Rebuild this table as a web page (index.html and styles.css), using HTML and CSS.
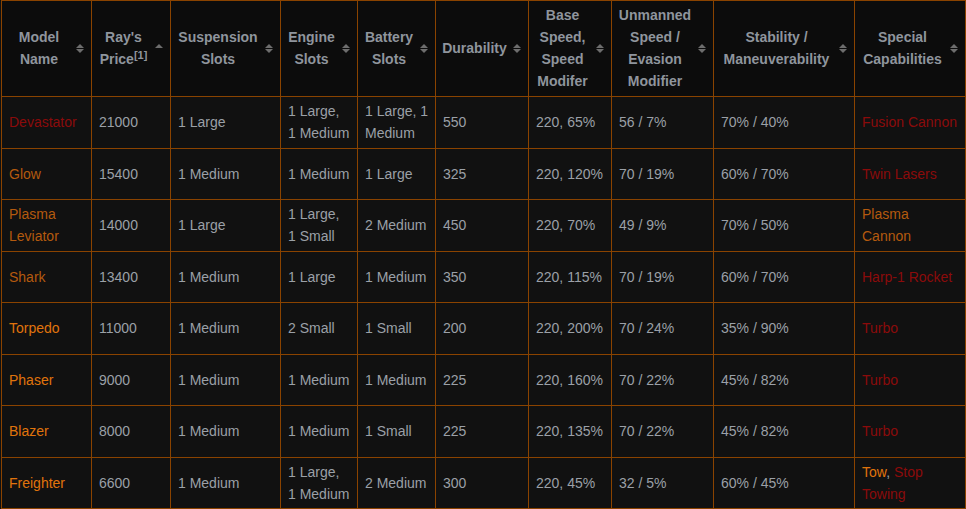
FILE: index.html
```html
<!DOCTYPE html>
<html lang="en">
<head>
<meta charset="utf-8">
<title>Hoverbikes</title>
<link rel="stylesheet" href="styles.css">
</head>
<body>
<table class="bikes">
  <colgroup>
    <col class="c1"><col class="c2"><col class="c3"><col class="c4"><col class="c5">
    <col class="c6"><col class="c7"><col class="c8"><col class="c9"><col class="c10">
  </colgroup>
  <thead>
    <tr>
      <th>Model Name<span class="sort"><svg width="8" height="9" viewBox="0 0 8 9"><path d="M4 0L8 4H0Z M0 5H8L4 9Z" fill="#6d6d6d"/></svg></span></th>
      <th>Ray's Price<sup>[1]</sup><span class="sort"><svg width="8" height="9" viewBox="0 0 8 9"><path d="M4 0L8 4H0Z" fill="#6d6d6d"/></svg></span></th>
      <th>Suspension Slots<span class="sort"><svg width="8" height="9" viewBox="0 0 8 9"><path d="M4 0L8 4H0Z M0 5H8L4 9Z" fill="#6d6d6d"/></svg></span></th>
      <th>Engine Slots<span class="sort"><svg width="8" height="9" viewBox="0 0 8 9"><path d="M4 0L8 4H0Z M0 5H8L4 9Z" fill="#6d6d6d"/></svg></span></th>
      <th>Battery Slots<span class="sort"><svg width="8" height="9" viewBox="0 0 8 9"><path d="M4 0L8 4H0Z M0 5H8L4 9Z" fill="#6d6d6d"/></svg></span></th>
      <th>Durability<span class="sort"><svg width="8" height="9" viewBox="0 0 8 9"><path d="M4 0L8 4H0Z M0 5H8L4 9Z" fill="#6d6d6d"/></svg></span></th>
      <th>Base Speed, Speed Modifer<span class="sort"><svg width="8" height="9" viewBox="0 0 8 9"><path d="M4 0L8 4H0Z M0 5H8L4 9Z" fill="#6d6d6d"/></svg></span></th>
      <th>Unmanned Speed / Evasion Modifier<span class="sort"><svg width="8" height="9" viewBox="0 0 8 9"><path d="M4 0L8 4H0Z M0 5H8L4 9Z" fill="#6d6d6d"/></svg></span></th>
      <th>Stability / Maneuverability<span class="sort"><svg width="8" height="9" viewBox="0 0 8 9"><path d="M4 0L8 4H0Z M0 5H8L4 9Z" fill="#6d6d6d"/></svg></span></th>
      <th>Special Capabilities<span class="sort"><svg width="8" height="9" viewBox="0 0 8 9"><path d="M4 0L8 4H0Z M0 5H8L4 9Z" fill="#6d6d6d"/></svg></span></th>
    </tr>
  </thead>
  <tbody>
    <tr>
      <td><a class="new">Devastator</a></td><td>21000</td><td>1 Large</td><td>1 Large, 1 Medium</td><td>1 Large, 1 Medium</td><td>550</td><td>220, 65%</td><td>56 / 7%</td><td>70% / 40%</td><td><a class="new">Fusion Cannon</a></td>
    </tr>
    <tr>
      <td><a class="visited">Glow</a></td><td>15400</td><td>1 Medium</td><td>1 Medium</td><td>1 Large</td><td>325</td><td>220, 120%</td><td>70 / 19%</td><td>60% / 70%</td><td><a class="new">Twin Lasers</a></td>
    </tr>
    <tr>
      <td><a class="visited">Plasma Leviator</a></td><td>14000</td><td>1 Large</td><td>1 Large, 1 Small</td><td>2 Medium</td><td>450</td><td>220, 70%</td><td>49 / 9%</td><td>70% / 50%</td><td><a class="visited">Plasma Cannon</a></td>
    </tr>
    <tr>
      <td><a class="visited">Shark</a></td><td>13400</td><td>1 Medium</td><td>1 Large</td><td>1 Medium</td><td>350</td><td>220, 115%</td><td>70 / 19%</td><td>60% / 70%</td><td><a class="new">Harp-1 Rocket</a></td>
    </tr>
    <tr>
      <td><a class="link">Torpedo</a></td><td>11000</td><td>1 Medium</td><td>2 Small</td><td>1 Small</td><td>200</td><td>220, 200%</td><td>70 / 24%</td><td>35% / 90%</td><td><a class="new">Turbo</a></td>
    </tr>
    <tr>
      <td><a class="link">Phaser</a></td><td>9000</td><td>1 Medium</td><td>1 Medium</td><td>1 Medium</td><td>225</td><td>220, 160%</td><td>70 / 22%</td><td>45% / 82%</td><td><a class="new">Turbo</a></td>
    </tr>
    <tr>
      <td><a class="link">Blazer</a></td><td>8000</td><td>1 Medium</td><td>1 Medium</td><td>1 Small</td><td>225</td><td>220, 135%</td><td>70 / 22%</td><td>45% / 82%</td><td><a class="new">Turbo</a></td>
    </tr>
    <tr>
      <td><a class="link">Freighter</a></td><td>6600</td><td>1 Medium</td><td>1 Large, 1 Medium</td><td>2 Medium</td><td>300</td><td>220, 45%</td><td>32 / 5%</td><td>60% / 45%</td><td><a class="link">Tow</a>, <a class="new">Stop Towing</a></td>
    </tr>
  </tbody>
</table>
</body>
</html>
```

FILE: styles.css
```css
html, body {
  margin: 0;
  padding: 0;
  background: #111111;
}

.bikes {
  border-collapse: collapse;
  table-layout: fixed;
  width: 964px;
  margin: 0 0 0 1px;
  font-family: "Liberation Sans", Arial, sans-serif;
  font-size: 14px;
  line-height: 22px;
  color: #9ba0a7;
  background: #111111;
}

.c1 { width: 90px; }
.c2 { width: 79px; }
.c3 { width: 110px; }
.c4 { width: 77px; }
.c5 { width: 78px; }
.c6 { width: 93px; }
.c7 { width: 83px; }
.c8 { width: 102px; }
.c9 { width: 141px; }
.c10 { width: 111px; }

.bikes th,
.bikes td {
  border: 1px solid #8a4300;
}

.bikes th {
  position: relative;
  background: #0c0c0c;
  color: #8f959d;
  font-weight: bold;
  text-align: center;
  vertical-align: middle;
  padding: 3px 21px 4px 6px;
  height: 87px;
}

.bikes th sup {
  font-size: 11px;
  line-height: 0;
  vertical-align: 5px;
}

.sort {
  position: absolute;
  right: 7px;
  top: 50%;
  margin-top: -5px;
  width: 8px;
  height: 9px;
  display: flex;
}

.bikes td {
  padding: 3px 6px 3px 7px;
  height: 44.5px;
  vertical-align: middle;
  text-align: left;
}

.bikes a {
  text-decoration: none;
}

.new { color: #8b0b0b; }
.visited { color: #b45a0e; }
.link { color: #e0740c; }
```
